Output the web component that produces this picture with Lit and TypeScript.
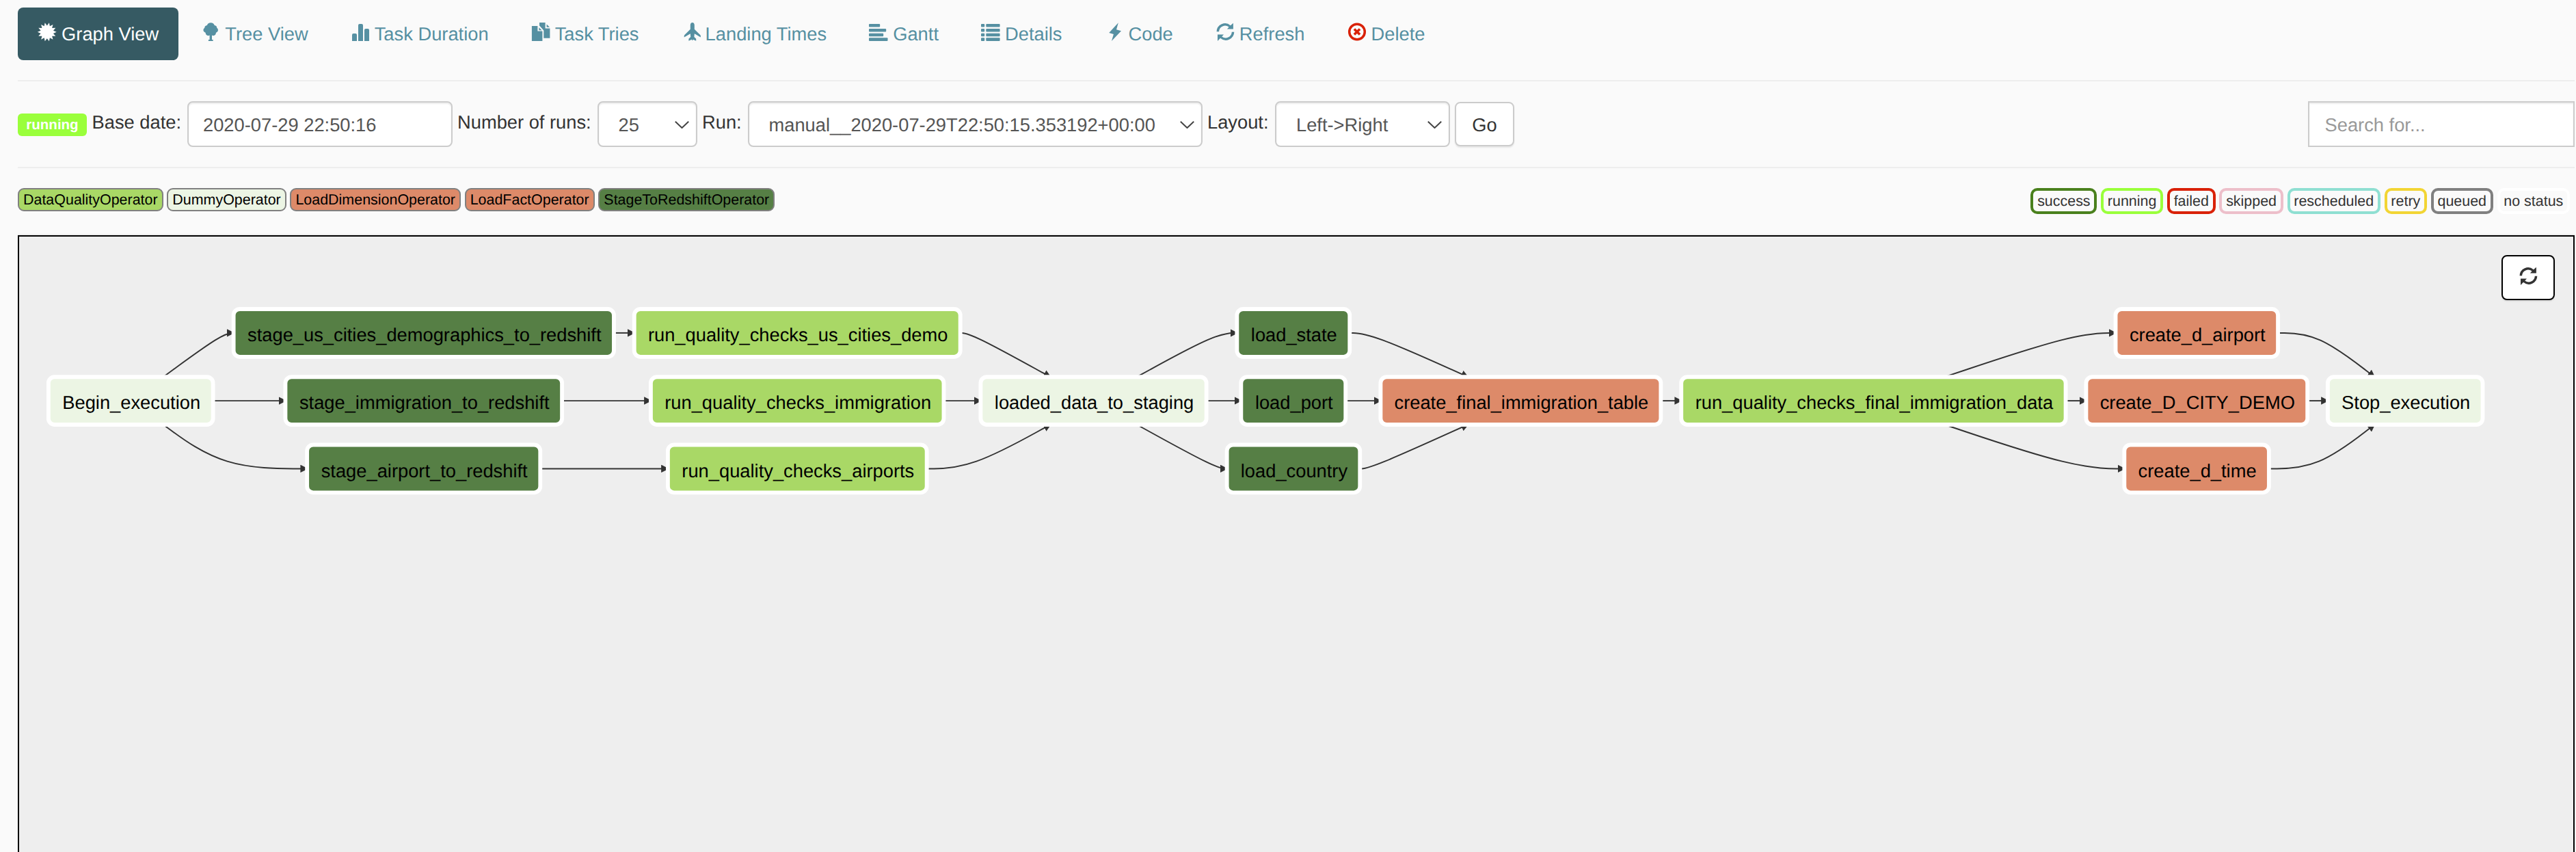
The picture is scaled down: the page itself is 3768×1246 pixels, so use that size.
import { LitElement, html, css, svg, TemplateResult } from "lit";
import { customElement, property } from "lit/decorators.js";

/* ---------- icons ---------- */

/* Star outline that starts with a notch at the top */
const burst = (spikes: number, c: number, outer: number, inner: number): string => {
  const pts: string[] = [];
  for (let i = 0; i < spikes * 2; i++) {
    const a = (Math.PI * i) / spikes;
    const r = i % 2 === 0 ? inner : outer;
    pts.push(`${(c + r * Math.sin(a)).toFixed(2)},${(c - r * Math.cos(a)).toFixed(2)}`);
  }
  return pts.join(" ");
};

const refreshArt = svg`
  <path d="M1.6 13.2 A12.3 12.3 0 0 1 21.9 4.2 L25.9 .7 V9.6 H16.9 L19.6 6.6 A8.9 8.9 0 0 0 5.1 13.2 Z"/>
  <path d="M27.3 13.8 A12.3 12.3 0 0 1 7 22.8 L3 27 V17.5 H12 L9.3 20.4 A8.9 8.9 0 0 0 23.8 13.8 Z"/>`;

const ICONS: Record<string, TemplateResult> = {
  certificate: svg`<polygon points=${burst(14, 13.8, 13.9, 9.4)} />`,
  tree: svg`<path d="M14.3 .3 C17 .3 19.2 1.8 19.7 3.9 C22 4.1 23.5 5.7 23.2 7.7 C24.6 8.6 25.2 10.1 24.9 11.6 C24.6 13.3 23.4 14.4 22 14.8 C21.9 17.4 20.2 19.2 18 19.2 C17.3 19.2 16.6 19 16 18.6 V25 H17.6 V27 H10.9 V25 H12.6 V18.6 C12 19 11.3 19.2 10.6 19.2 C8.4 19.2 6.7 17.4 6.6 14.8 C5.2 14.4 3.8 13.3 3.5 11.6 C3.2 10.1 4 8.6 5.3 7.7 C5.1 5.7 6.6 4.1 8.9 3.9 C9.4 1.8 11.6 .3 14.3 .3 Z"/>`,
  stats: svg`
    <path d="M2 17.9 q0 -2 2 -2 h3 q2 0 2 2 V27 H2 Z"/>
    <path d="M11 4 q0 -2 2 -2 h3 q2 0 2 2 V27 H11 Z"/>
    <path d="M20 10.9 q0 -2 2 -2 h3 q2 0 2 2 V27 H20 Z"/>`,
  duplicate: svg`
    <path d="M.9 4.9 H9.4 V12.6 H16.4 V27 H.9 Z"/>
    <path d="M11.4 7.2 L15.6 11.2 H11.4 Z"/>
    <path d="M12 0 H20.6 V8.6 H27.4 V22.8 H18.3 V11.6 L12 4.6 Z"/>
    <path d="M22.6 2.4 L27 6.8 H22.6 Z"/>`,
  plane: svg`<path d="M15.8 .1 C17.6 .1 18.8 1.7 18.8 3.8 V9.8 L27.4 18.2 C27.9 18.7 28 19.6 27.8 21.6 L18.8 16.2 L18.4 21 L21.2 23.8 V26.8 L16.8 24.8 L15.8 26.4 L14.8 24.8 L10.4 26.8 V23.8 L13.2 21 L12.8 16.2 L3.8 21.6 C3.6 19.6 3.7 18.7 4.2 18.2 L12.8 9.8 V3.8 C12.8 1.7 14 .1 15.8 .1 Z"/>`,
  align: svg`
    <rect x="0" y="2" width="16.2" height="4.6" rx="1"/>
    <rect x="0" y="9" width="25.2" height="4.4" rx="1"/>
    <rect x="0" y="15.8" width="21.2" height="4.4" rx="1"/>
    <rect x="0" y="22.3" width="27.5" height="4.7" rx="1"/>`,
  list: svg`
    <rect x="0" y="2" width="5.2" height="4.6" rx="1"/><rect x="7.3" y="2" width="20.3" height="4.6" rx="1"/>
    <rect x="0" y="9" width="5.2" height="4.4" rx="1"/><rect x="7.3" y="9" width="20.3" height="4.4" rx="1"/>
    <rect x="0" y="15.8" width="5.2" height="4.4" rx="1"/><rect x="7.3" y="15.8" width="20.3" height="4.4" rx="1"/>
    <rect x="0" y="22.3" width="5.2" height="4.7" rx="1"/><rect x="7.3" y="22.3" width="20.3" height="4.7" rx="1"/>`,
  flash: svg`<path d="M19.8 .2 L6.2 15 L12.9 17 L10 27 L24 12.3 L17 10.2 Z"/>`,
  refresh: refreshArt,
  remove: svg`
    <circle cx="14" cy="13.5" r="11.3" fill="none" stroke="currentColor" stroke-width="3.5"/>
    <path d="M9.9 9.4 L18.1 17.6 M18.1 9.4 L9.9 17.6" fill="none" stroke="currentColor" stroke-width="3.6"/>`,
};

@customElement("glyph-icon")
export class GlyphIcon extends LitElement {
  @property() name = "";
  static styles = css`
    :host { display: block; width: 27.3px; height: 27px; flex: none; }
    .art { display: block; width: 27.3px; height: 27px; overflow: visible; fill: currentColor; }
  `;
  render() {
    return html`<svg class="art" viewBox="0 0 27.3 27">${ICONS[this.name]}</svg>`;
  }
}

/* ---------- graph data ---------- */

type Kind = "quality" | "dummy" | "load" | "stage";
interface TaskNode { id: string; kind: Kind; left: number; right: number; row: number; }

const FILL: Record<Kind, string> = {
  quality: "#a9d866",
  dummy: "#ecf5e4",
  load: "#dd8a69",
  stage: "#567f45",
};

const ROW_Y = [486.9, 586.1, 685.4];
const HALF_H = 34.9;
const STROKE = 5.85;

const NODES: TaskNode[] = [
  { id: "Begin_execution", kind: "dummy", left: 67.9, right: 314.5, row: 1 },
  { id: "stage_us_cities_demographics_to_redshift", kind: "stage", left: 338.7, right: 900.9, row: 0 },
  { id: "stage_immigration_to_redshift", kind: "stage", left: 414.5, right: 825, row: 1 },
  { id: "stage_airport_to_redshift", kind: "stage", left: 446.2, right: 793.2, row: 2 },
  { id: "run_quality_checks_us_cities_demo", kind: "quality", left: 924.8, right: 1407.6, row: 0 },
  { id: "run_quality_checks_immigration", kind: "quality", left: 949, right: 1383.4, row: 1 },
  { id: "run_quality_checks_airports", kind: "quality", left: 974, right: 1358.6, row: 2 },
  { id: "loaded_data_to_staging", kind: "dummy", left: 1431.5, right: 1767.6, row: 1 },
  { id: "load_state", kind: "stage", left: 1806.4, right: 1977.2, row: 0 },
  { id: "load_port", kind: "stage", left: 1812.4, right: 1971.2, row: 1 },
  { id: "load_country", kind: "stage", left: 1791.7, right: 1992.2, row: 2 },
  { id: "create_final_immigration_table", kind: "load", left: 2016.5, right: 2432.3, row: 1 },
  { id: "run_quality_checks_final_immigration_data", kind: "quality", left: 2456.3, right: 3024.5, row: 1 },
  { id: "create_d_airport", kind: "load", left: 3091.6, right: 3335, row: 0 },
  { id: "create_D_CITY_DEMO", kind: "load", left: 3048.5, right: 3378.1, row: 1 },
  { id: "create_d_time", kind: "load", left: 3104.4, right: 3321.8, row: 2 },
  { id: "Stop_execution", kind: "dummy", left: 3402, right: 3634.4, row: 1 },
];

/* from, to, x of the routing point, row of the routing point */
const EDGES: [number, number, number, number][] = [
  [0, 1, 326.6, 0], [0, 2, 326.6, 1], [0, 3, 326.6, 2],
  [1, 4, 912.9, 0], [2, 5, 912.9, 1], [3, 6, 912.9, 2],
  [4, 7, 1419.5, 0], [5, 7, 1419.5, 1], [6, 7, 1419.5, 2],
  [7, 8, 1779.7, 0], [7, 9, 1779.7, 1], [7, 10, 1779.7, 2],
  [8, 11, 2004.5, 0], [9, 11, 2004.5, 1], [10, 11, 2004.5, 2],
  [11, 12, 2444.4, 1],
  [12, 13, 3036.5, 0], [12, 14, 3036.5, 1], [12, 15, 3036.5, 2],
  [13, 16, 3390, 0], [14, 16, 3390, 1], [15, 16, 3390, 2],
];

type Pt = [number, number];

const borderPoint = (n: TaskNode, [px, py]: Pt): Pt => {
  const cx = (n.left + n.right) / 2;
  const cy = ROW_Y[n.row];
  const w = (n.right - n.left - STROKE) / 2;
  const dx = px - cx;
  const dy = py - cy;
  if (Math.abs(dy) * w > Math.abs(dx) * HALF_H) {
    const s = dy < 0 ? -HALF_H : HALF_H;
    return [cx + (s * dx) / dy, cy + s];
  }
  const s = dx < 0 ? -w : w;
  return [cx + s, cy + (s * dy) / dx];
};

const mix = (a: Pt, b: Pt, wa: number, wb: number): string =>
  `${((a[0] * wa + b[0] * wb) / (wa + wb)).toFixed(2)},${((a[1] * wa + b[1] * wb) / (wa + wb)).toFixed(2)}`;

/* B-spline through the two borders and the routing point */
const edgePath = ([from, to, mx, row]: [number, number, number, number]): string => {
  const m: Pt = [mx, ROW_Y[row]];
  const a = borderPoint(NODES[from], m);
  const b = borderPoint(NODES[to], m);
  const k = `${((a[0] + 4 * m[0] + b[0]) / 6).toFixed(2)},${((a[1] + 4 * m[1] + b[1]) / 6).toFixed(2)}`;
  return `M${a[0]},${a[1]} L${mix(a, m, 5, 1)} C${mix(a, m, 2, 1)} ${mix(a, m, 1, 2)} ${k} ` +
    `C${mix(m, b, 2, 1)} ${mix(m, b, 1, 2)} ${mix(m, b, 1, 5)} L${b[0]},${b[1]}`;
};

@customElement("dag-graph")
export class DagGraph extends LitElement {
  static styles = css`
    :host { display: block; height: 100%; }
    .canvas { display: block; width: 3736px; height: 900px; font-family: "Liberation Sans", Arial, sans-serif; text-rendering: geometricPrecision; }
    .edge { fill: none; stroke: #333; stroke-width: 1.95px; }
    .head { fill: #333; }
    .box { stroke: #fff; stroke-width: 5.85px; }
    .name { font-size: 27.3px; fill: #000; text-anchor: middle; }
  `;
  render() {
    return html`
      <svg class="canvas" viewBox="28 346 3736 900">
        <defs>
          <marker id="head" viewBox="0 0 10 10" refX="8.5" refY="5" markerUnits="userSpaceOnUse"
            markerWidth="11.5" markerHeight="11.5" orient="auto">
            <path class="head" d="M0 0 L10 5 L0 10 Z"></path>
          </marker>
        </defs>
        ${EDGES.map((e) => svg`<path class="edge" d=${edgePath(e)} marker-end="url(#head)"/>`)}
        ${NODES.map((n) => svg`
          <rect class="box" x=${n.left + STROKE / 2} y=${ROW_Y[n.row] - HALF_H}
            width=${n.right - n.left - STROKE} height=${HALF_H * 2} rx="9" fill=${FILL[n.kind]}/>
          <text class="name" x=${(n.left + n.right) / 2 + 1} y=${ROW_Y[n.row] + 12.1}>${n.id}</text>`)}
      </svg>`;
  }
}

/* ---------- page ---------- */

const TABS: [string, string][] = [
  ["certificate", "Graph View"], ["tree", "Tree View"], ["stats", "Task Duration"],
  ["duplicate", "Task Tries"], ["plane", "Landing Times"], ["align", "Gantt"],
  ["list", "Details"], ["flash", "Code"], ["refresh", "Refresh"], ["remove", "Delete"],
];

const OPERATORS: [string, Kind][] = [
  ["DataQualityOperator", "quality"], ["DummyOperator", "dummy"],
  ["LoadDimensionOperator", "load"], ["LoadFactOperator", "load"],
  ["StageToRedshiftOperator", "stage"],
];

const STATES = ["success", "running", "failed", "skipped", "rescheduled", "retry", "queued", "no status"];

@customElement("app-root")
export class AppRoot extends LitElement {
  static styles = css`
    :host {
      display: flex; flex-direction: column; box-sizing: border-box;
      width: 3768px; height: 1246px; padding: 11px 2px 0 26px; overflow: hidden;
      background: #fafafa; color: #333;
      font: 27.3px/39px "Liberation Sans", Arial, sans-serif;
      text-rendering: geometricPrecision; white-space: nowrap;
    }
    .tabs { display: flex; gap: 3.8px; height: 77px; }
    .tab { display: flex; align-items: flex-start; gap: 7.6px; padding: 0 29.2px; border-radius: 8px; color: #5690a2; }
    .tab.active { background: #365a63; color: #fff; }
    .tab-icon { margin-top: 22px; }
    .tab-icon.danger { color: #d92107; }
    .tab-text { margin-top: 19px; }
    .rule { height: 2px; background: #eee; flex: none; }
    .rule.first { margin: 29px 0; }
    .rule.second { margin: 29px 0; }
    .form {
      display: grid; height: 67px;
      grid-template-columns: 101px 146.5px 388px 212px 146px 74px 665px 106.5px 255.5px 94px 1fr 390px;
      align-items: start;
    }
    .badge {
      margin-top: 18px; height: 33px; border-radius: 6px; background: #9aff3b; color: #fff;
      font-size: 20.5px; line-height: 33px; font-weight: bold; text-align: center;
    }
    .label { padding: 11px 0 0 7.5px; }
    .field {
      display: flex; align-items: center; justify-content: space-between; box-sizing: border-box;
      height: 67px; border: 2px solid #ccc; border-radius: 8px; background: #fff; color: #555;
      padding: 1px 10px 0 21.5px; box-shadow: inset 0 2px 2px rgba(0, 0, 0, 0.075);
    }
    .field.pick { padding-left: 29px; }
    .field.search { grid-column: 12; border-radius: 0; color: #999; padding-left: 22.5px; }
    .chev { width: 21px; height: 11px; fill: none; stroke: #444; stroke-width: 2px; flex: none; }
    .go {
      box-sizing: border-box; height: 65px; margin: 1px 0 0 7.5px; width: 87px; border: 2px solid #ccc;
      border-radius: 8px; background: #fff; line-height: 63px; text-align: center;
      box-shadow: 0 2px 2px rgba(0, 0, 0, 0.08);
    }
    .legend { display: flex; justify-content: space-between; align-items: flex-start; height: 67px; flex: none; font-size: 21.45px; }
    .ops { display: flex; gap: 5.7px; }
    .op {
      box-sizing: border-box; height: 34px; line-height: 31px; padding: 0 6px; border: 2px solid #808080;
      border-radius: 9px; color: #000;
    }
    .op.quality { background: #a9d866; }
    .op.dummy { background: #ecf5e4; }
    .op.load { background: #dd8a69; }
    .op.stage { background: #567f45; }
    .states { display: flex; gap: 5.9px; margin-right: 7px; }
    .state {
      box-sizing: border-box; height: 38px; line-height: 30px; padding: 0 5.7px; border: 4px solid #fff; border-radius: 10px;
    }
    .state.success { border-color: #4a801d; }
    .state.running { border-color: #9aff3b; }
    .state.failed { border-color: #d92107; }
    .state.skipped { border-color: #edbfca; }
    .state.rescheduled { border-color: #8fdfd2; }
    .state.retry { border-color: #f2d534; }
    .state.queued { border-color: #808080; }
    .frame {
      position: relative; flex: 1 0 900px; border: 2px solid #000; border-bottom: 0; background: #eee;
    }
    .reload {
      position: absolute; right: 27px; top: 27px; box-sizing: border-box; width: 78px; height: 66px;
      display: flex; justify-content: center; align-items: flex-start; padding-top: 15px;
      border: 2px solid #000; border-radius: 8px; background: #fff; box-shadow: 0 2px 2px rgba(0, 0, 0, 0.08);
    }
  `;

  private chevron() {
    return html`<svg class="chev" viewBox="0 0 21 11"><path d="M.8 .8 L10.5 10 L20.2 .8"></path></svg>`;
  }

  render() {
    return html`
      <nav class="tabs">
        ${TABS.map(([icon, text], i) => html`
          <a class="tab ${i === 0 ? "active" : ""}">
            <glyph-icon class="tab-icon ${icon === "remove" ? "danger" : ""}" name=${icon}></glyph-icon>
            <span class="tab-text">${text}</span>
          </a>`)}
      </nav>
      <div class="rule first"></div>
      <div class="form">
        <span class="badge">running</span>
        <span class="label">Base date:</span>
        <div class="field">2020-07-29 22:50:16</div>
        <span class="label">Number of runs:</span>
        <div class="field pick">25${this.chevron()}</div>
        <span class="label">Run:</span>
        <div class="field pick">manual__2020-07-29T22:50:15.353192+00:00${this.chevron()}</div>
        <span class="label">Layout:</span>
        <div class="field pick">Left-&gt;Right${this.chevron()}</div>
        <div class="go">Go</div>
        <div class="field search">Search for...</div>
      </div>
      <div class="rule second"></div>
      <div class="legend">
        <div class="ops">${OPERATORS.map(([t, k]) => html`<span class="op ${k}">${t}</span>`)}</div>
        <div class="states">${STATES.map((s) => html`<span class="state ${s.replace(" ", "-")}">${s}</span>`)}</div>
      </div>
      <div class="rule"></div>
      <div class="frame">
        <dag-graph></dag-graph>
        <div class="reload"><glyph-icon name="refresh"></glyph-icon></div>
      </div>`;
  }
}
